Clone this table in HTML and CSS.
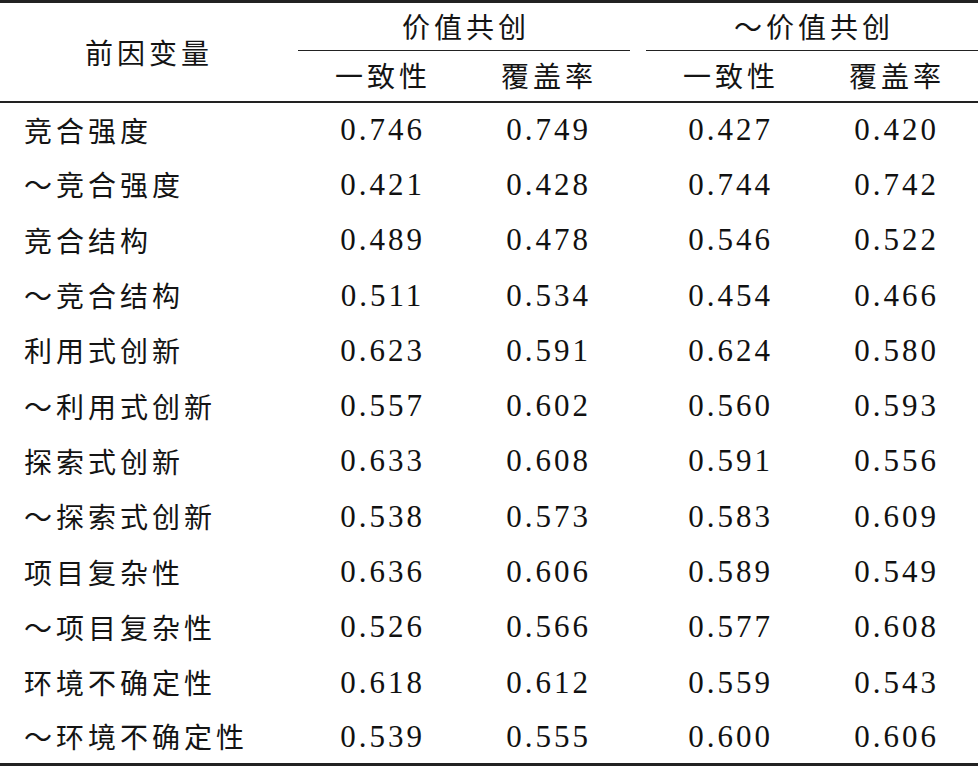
FILE: index.html
```html
<!DOCTYPE html>
<html lang="zh">
<head>
<meta charset="utf-8">
<title>前因变量必要性分析</title>
<link rel="stylesheet" href="styles.css">
</head>
<body>
<table class="tbl">
  <colgroup>
    <col class="c-name">
    <col class="c-val">
    <col class="c-val">
    <col class="c-gap">
    <col class="c-val">
    <col class="c-val">
  </colgroup>
  <thead>
    <tr class="hr1">
      <th class="h-name" rowspan="2">前因变量</th>
      <th class="h-group" colspan="2"><span class="cj">价值共创</span></th>
      <th class="gap"></th>
      <th class="h-group" colspan="2"><span class="cj">～价值共创</span></th>
    </tr>
    <tr class="hr2">
      <th class="h-sub"><span class="cj">一致性</span></th>
      <th class="h-sub"><span class="cj">覆盖率</span></th>
      <th class="gap"></th>
      <th class="h-sub"><span class="cj">一致性</span></th>
      <th class="h-sub"><span class="cj">覆盖率</span></th>
    </tr>
  </thead>
  <tbody>
    <tr><td class="name">竞合强度</td><td class="num">0.746</td><td class="num">0.749</td><td class="gap"></td><td class="num">0.427</td><td class="num">0.420</td></tr>
    <tr><td class="name">～竞合强度</td><td class="num">0.421</td><td class="num">0.428</td><td class="gap"></td><td class="num">0.744</td><td class="num">0.742</td></tr>
    <tr><td class="name">竞合结构</td><td class="num">0.489</td><td class="num">0.478</td><td class="gap"></td><td class="num">0.546</td><td class="num">0.522</td></tr>
    <tr><td class="name">～竞合结构</td><td class="num">0.511</td><td class="num">0.534</td><td class="gap"></td><td class="num">0.454</td><td class="num">0.466</td></tr>
    <tr><td class="name">利用式创新</td><td class="num">0.623</td><td class="num">0.591</td><td class="gap"></td><td class="num">0.624</td><td class="num">0.580</td></tr>
    <tr><td class="name">～利用式创新</td><td class="num">0.557</td><td class="num">0.602</td><td class="gap"></td><td class="num">0.560</td><td class="num">0.593</td></tr>
    <tr><td class="name">探索式创新</td><td class="num">0.633</td><td class="num">0.608</td><td class="gap"></td><td class="num">0.591</td><td class="num">0.556</td></tr>
    <tr><td class="name">～探索式创新</td><td class="num">0.538</td><td class="num">0.573</td><td class="gap"></td><td class="num">0.583</td><td class="num">0.609</td></tr>
    <tr><td class="name">项目复杂性</td><td class="num">0.636</td><td class="num">0.606</td><td class="gap"></td><td class="num">0.589</td><td class="num">0.549</td></tr>
    <tr><td class="name">～项目复杂性</td><td class="num">0.526</td><td class="num">0.566</td><td class="gap"></td><td class="num">0.577</td><td class="num">0.608</td></tr>
    <tr><td class="name">环境不确定性</td><td class="num">0.618</td><td class="num">0.612</td><td class="gap"></td><td class="num">0.559</td><td class="num">0.543</td></tr>
    <tr><td class="name">～环境不确定性</td><td class="num">0.539</td><td class="num">0.555</td><td class="gap"></td><td class="num">0.600</td><td class="num">0.606</td></tr>
  </tbody>
</table>
</body>
</html>
```
FILE: styles.css
```css
html, body {
  margin: 0;
  padding: 0;
  background: #ffffff;
}

body {
  width: 978px;
  height: 766px;
  overflow: hidden;
  color: #111111;
  font-family: "Liberation Serif", "Noto Sans CJK SC", serif;
}

.tbl {
  width: 978px;
  border-collapse: collapse;
  table-layout: fixed;
  border-top: 3px solid #222222;
  border-bottom: 5px solid #222222;
}

.c-name { width: 298px; }
.c-val { width: 166px; }
.c-gap { width: 16px; }

.tbl th,
.tbl td {
  padding: 0;
  font-weight: normal;
  text-align: center;
  vertical-align: middle;
}

.hr1 { height: 49px; }
.hr2 { height: 51px; }

.h-name,
.cj,
.name {
  font-family: "Noto Sans CJK SC", sans-serif;
  font-size: 28px;
  font-weight: 400;
  letter-spacing: 4px;
  line-height: 1;
  color: #141414;
}

.h-name {
  border-bottom: 2px solid #222222;
  padding-left: 4px;
}

.cj {
  display: inline-block;
  margin-right: -4px;
}

.h-group {
  border-bottom: 1.5px solid #222222;
}

.h-sub {
  border-bottom: 2px solid #222222;
}

.hr2 .gap {
  border-bottom: 2px solid #222222;
}

.tbl tbody tr {
  height: 55.3px;
}

.name {
  text-align: left !important;
  padding-left: 24px !important;
}

.num {
  font-family: "Liberation Serif", serif;
  font-size: 31px;
  letter-spacing: 3px;
  text-indent: 3px;
  line-height: 1;
  color: #111111;
}
```
